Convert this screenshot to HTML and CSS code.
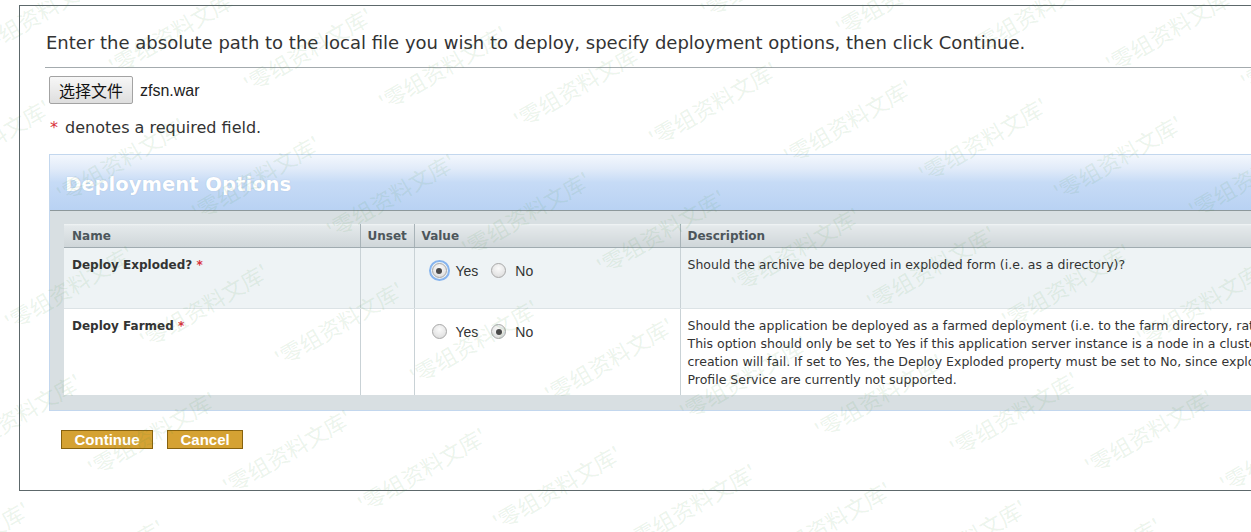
FILE: index.html
```html
<!DOCTYPE html>
<html lang="en">
<head>
<meta charset="utf-8">
<title>Deploy</title>
<link rel="stylesheet" href="styles.css">
</head>
<body>
<div class="page">
  <div class="box">
    <p class="intro">Enter the absolute path to the local file you wish to deploy, specify deployment options, then click Continue.</p>
    <div class="rule"></div>
    <div class="file-row">
      <button class="file-btn" type="button">选择文件</button>
      <span class="file-name">zfsn.war</span>
    </div>
    <p class="req"><span class="star">*</span> denotes a required field.</p>

    <div class="panel">
      <div class="panel-head"><h2 class="panel-title">Deployment Options</h2></div>
      <div class="panel-body">
        <table class="props">
          <colgroup>
            <col class="c-name"><col class="c-unset"><col class="c-value"><col class="c-desc">
          </colgroup>
          <thead>
            <tr><th>Name</th><th>Unset</th><th>Value</th><th>Description</th></tr>
          </thead>
          <tbody>
            <tr class="row-odd">
              <td class="name">Deploy Exploded? <span class="star">*</span></td>
              <td></td>
              <td class="value">
                <div class="radios">
                  <label class="opt"><input type="radio" name="exploded" class="radio focus" checked><span>Yes</span></label>
                  <label class="opt"><input type="radio" name="exploded" class="radio"><span>No</span></label>
                </div>
              </td>
              <td class="desc">Should the archive be deployed in exploded form (i.e. as a directory)?</td>
            </tr>
            <tr class="row-even">
              <td class="name">Deploy Farmed <span class="star">*</span></td>
              <td></td>
              <td class="value">
                <div class="radios">
                  <label class="opt"><input type="radio" name="farmed" class="radio"><span>Yes</span></label>
                  <label class="opt"><input type="radio" name="farmed" class="radio" checked><span>No</span></label>
                </div>
              </td>
              <td class="desc">Should the application be deployed as a farmed deployment (i.e. to the farm directory, rather than the deploy directory)?<br>This option should only be set to Yes if this application server instance is a node in a cluster; otherwise, the deployment<br>creation will fail. If set to Yes, the Deploy Exploded property must be set to No, since exploded farmed deployments via the<br>Profile Service are currently not supported.</td>
            </tr>
          </tbody>
        </table>
      </div>
    </div>

    <div class="actions">
      <button class="btn" type="button">Continue</button>
      <button class="btn" type="button">Cancel</button>
    </div>
  </div>
  <div class="watermark" aria-hidden="true"><div class="wm-grid"></div></div>
</div>
<script src="script.js"></script>
</body>
</html>
```

FILE: styles.css
```css
html, body {
  margin: 0;
  padding: 0;
  background: #ffffff;
}
body {
  width: 1251px;
  height: 532px;
  overflow: hidden;
  font-family: "DejaVu Sans", Verdana, sans-serif;
  color: #333333;
}
.page {
  position: relative;
  width: 1251px;
  height: 532px;
  overflow: hidden;
  padding: 5px 0 0 19px;
  box-sizing: border-box;
}
.box {
  width: 1400px;
  height: 486px;
  box-sizing: border-box;
  border: 1px solid #5d686b;
  padding: 0 0 0 26px;
}
.intro {
  margin: 26px 0 0 0;
  font-size: 18px;
  line-height: 22px;
  color: #333333;
  white-space: nowrap;
}
.rule {
  margin: 13px 0 0 -1px;
  height: 1px;
  background: #a4abae;
}
.file-row {
  display: flex;
  align-items: center;
  margin: 8px 0 0 3px;
  height: 28px;
}
.file-btn {
  height: 28px;
  padding: 0 9px;
  margin: 0;
  border: 1px solid #a3a3a3;
  border-radius: 2px;
  background: linear-gradient(#f7f7f7, #dedede);
  font-family: "Noto Sans CJK SC", sans-serif;
  font-size: 16px;
  color: #111;
}
.file-name {
  margin: 2px 0 0 7px;
  font-family: "Liberation Sans", Arial, sans-serif;
  font-size: 16px;
  color: #222;
}
.req {
  margin: 14px 0 0 4px;
  font-size: 16px;
  line-height: 20px;
  color: #333;
}
.req .star {
  margin-right: 2px;
}
.star {
  color: #d9323c;
}
.panel {
  margin: 16px 0 0 3px;
  border: 1px solid #c3d7ee;
}
.panel-head {
  height: 56px;
  box-sizing: border-box;
  border-bottom: 1px solid #8d989b;
  background: linear-gradient(to bottom, #f3f7fd 0%, #e1ebf9 25%, #c6dbf6 50%, #b9d2f3 100%);
  display: flex;
  align-items: center;
  padding: 4px 0 0 15px;
}
.panel-title {
  margin: 0;
  font-size: 19.6px;
  font-weight: bold;
  color: #ffffff;
  text-shadow: 0 0 1px rgba(90, 120, 150, 0.35);
}
.panel-body {
  background: #d8dfe2;
  padding: 13px 0 15px 14px;
}
.props {
  border-collapse: collapse;
  table-layout: fixed;
  width: 1320px;
  font-size: 12px;
}
.c-name { width: 296px; }
.c-unset { width: 54px; }
.c-value { width: 266px; }
.props th {
  height: 23px;
  padding: 1px 7px 0;
  text-align: left;
  font-weight: bold;
  font-size: 12px;
  color: #4d565b;
  background: linear-gradient(to bottom, #f1f4f5 0px, #e4e9eb 2px, #cfd6d9 100%);
  border-bottom: 1px solid #a0abb0;
  border-left: 1px solid #a8b3b8;
  box-sizing: border-box;
}
.props th:first-child {
  border-left: none;
  padding-left: 8px;
}
.props td {
  vertical-align: top;
  padding: 8px 7px 6px;
  border-left: 1px solid #c9d2d6;
  line-height: 18px;
}
.props td:first-child {
  border-left: none;
  padding-left: 8px;
}
.row-odd td {
  background: #eef3f5;
  height: 61px;
  box-sizing: border-box;
  border-bottom: 1px solid #dce3e6;
}
.row-even td {
  background: #ffffff;
}
.name {
  font-weight: bold;
  color: #333;
}
.desc {
  white-space: nowrap;
  overflow: hidden;
  color: #333;
  font-size: 12.5px;
}
.props td.value {
  padding: 13px 0 0 17px;
}
.radios {
  display: flex;
  align-items: center;
  gap: 13px;
  height: 18px;
}
.opt {
  display: flex;
  align-items: center;
  gap: 9px;
  font-family: "Liberation Sans", Arial, sans-serif;
  font-size: 14px;
  color: #333;
  padding-top: 2px;
}
.radio {
  appearance: none;
  -webkit-appearance: none;
  margin: 0;
  width: 15px;
  height: 15px;
  border-radius: 50%;
  border: 1px solid #a9a9a9;
  background: radial-gradient(circle at 50% 35%, #fbfbfb 0%, #e6e6e6 60%, #d4d4d4 100%);
  position: relative;
  box-sizing: border-box;
}
.radio:checked::after {
  content: "";
  position: absolute;
  left: 3.5px;
  top: 3.5px;
  width: 6px;
  height: 6px;
  border-radius: 50%;
  background: #4a4a4a;
}
.radio.focus {
  outline: 2px solid #86b4ee;
  outline-offset: 1px;
  border-radius: 50%;
}
.actions {
  display: flex;
  gap: 14px;
  margin: 19px 0 0 15px;
}
.btn {
  height: 19px;
  margin: 0;
  padding: 0 12.5px;
  border: 1px solid #87620f;
  background: #d5a233;
  color: #ffffff;
  font-family: "Liberation Sans", Arial, sans-serif;
  font-weight: bold;
  font-size: 15px;
  line-height: 17px;
}
.watermark {
  position: absolute;
  left: 0;
  top: 0;
  width: 1251px;
  height: 532px;
  overflow: hidden;
  pointer-events: none;
}
.wm-grid {
  position: absolute;
  left: 0;
  top: 0;
  display: grid;
  grid-template-columns: repeat(15, 135px);
  grid-auto-rows: 128px;
  transform-origin: 0 0;
  transform: matrix(1, 0.1333, -0.40625, 1, -139, -371);
}
.wm-text {
  display: block;
  white-space: nowrap;
  line-height: 0;
  transform-origin: 0 0;
  transform: matrix(0.6288, -0.5839, 0.8080, 0.7582, 0, 0);
  font-family: "Noto Sans CJK SC", sans-serif;
  font-size: 22px;
  color: rgba(70, 150, 70, 0.11);
}
```

FILE: script.js
```js
(function () {
  var grid = document.querySelector('.wm-grid');
  for (var i = 0; i < 15 * 10; i++) {
    var cell = document.createElement('div');
    cell.className = 'wm-cell';
    var t = document.createElement('span');
    t.className = 'wm-text';
    t.textContent = "'零组资料文库'";
    cell.appendChild(t);
    grid.appendChild(cell);
  }
})();
```
